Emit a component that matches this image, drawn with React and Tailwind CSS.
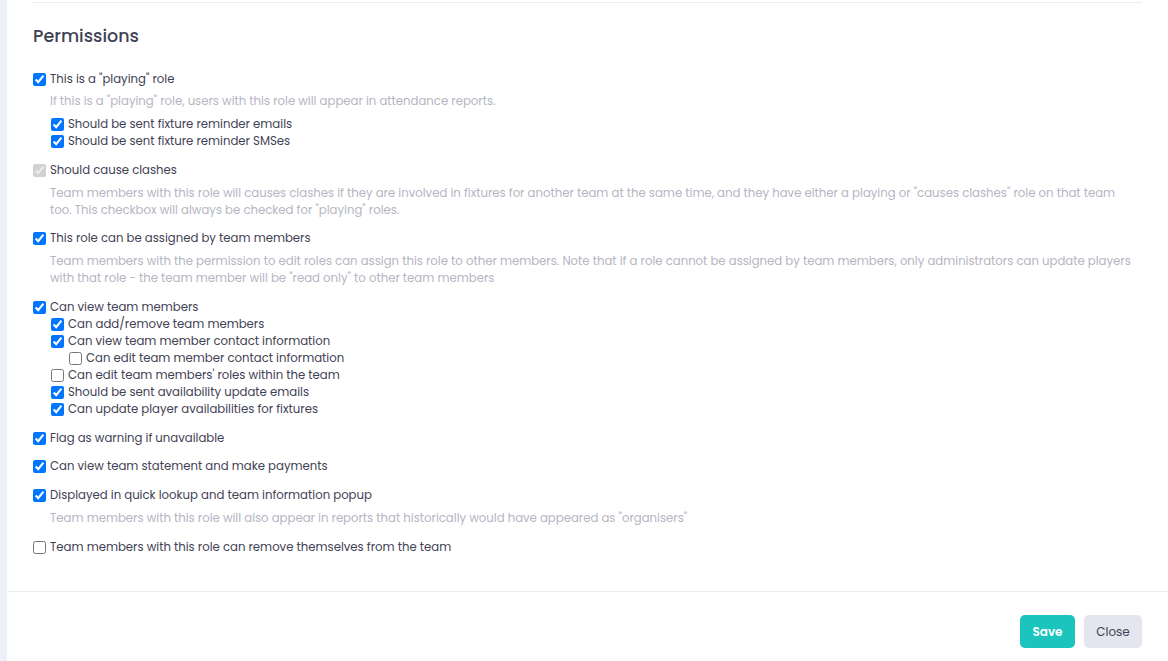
import React from "react";

function Box({ checked, disabled }) {
  return (
    <input
      type="checkbox"
      defaultChecked={checked}
      disabled={disabled}
      className="m-0 h-[13px] w-[13px] shrink-0 accent-[#0075ff]"
    />
  );
}

function Row({ checked, disabled, children, indent = 0 }) {
  const pad = indent === 0 ? "pl-0" : indent === 1 ? "pl-[18px]" : "pl-[36px]";
  return (
    <label className={`flex items-center gap-[4px] h-[17px] ${pad}`}>
      <Box checked={checked} disabled={disabled} />
      <span>{children}</span>
    </label>
  );
}

function Desc({ children, tight }) {
  return (
    <div className={`pl-[17px] pr-[5px] ${tight ? "mt-[5px]" : "mt-[6px]"} text-[#b5b5c3] leading-[17px]`}>
      {children}
    </div>
  );
}

export default function App() {
  return (
    <div className="flex w-[1168px] h-[661px] bg-[#eef0f8] overflow-hidden" style={{ fontFamily: "Poppins, 'Open Sans', sans-serif" }}>
      <div className="ml-[7px] flex-1 bg-white flex flex-col">
        <div className="px-[26px] flex-1">
          <div className="h-[3px] border-b border-[#ebedf3]" />
          <h2 className="mt-[22px] text-[17.5px] leading-[22px] font-medium text-[#3f4254]">Permissions</h2>
          <div className="mt-[24px] text-[11.7px] leading-[17px] text-[#3f4254]">
            <div className="mb-[12px]">
              <Row checked>This is a "playing" role</Row>
              <Desc tight>If this is a "playing" role, users with this role will appear in attendance reports.</Desc>
              <div className="mt-[6px]">
                <Row checked indent={1}>Should be sent fixture reminder emails</Row>
                <Row checked indent={1}>Should be sent fixture reminder SMSes</Row>
              </div>
            </div>
            <div className="mb-[11px]">
              <Row checked disabled>Should cause clashes</Row>
              <Desc>
                Team members with this role will causes clashes if they are involved in fixtures for another team at the same time, and they have either a playing or "causes clashes" role on that team too. This checkbox will always be checked for "playing" roles.
              </Desc>
            </div>
            <div className="mb-[12px]">
              <Row checked>This role can be assigned by team members</Row>
              <Desc>
                Team members with the permission to edit roles can assign this role to other members. Note that if a role cannot be assigned by team members, only administrators can update players with that role - the team member will be "read only" to other team members
              </Desc>
            </div>
            <div className="mb-[12px]">
              <Row checked>Can view team members</Row>
              <Row checked indent={1}>Can add/remove team members</Row>
              <Row checked indent={1}>Can view team member contact information</Row>
              <Row indent={2}>Can edit team member contact information</Row>
              <Row indent={1}>Can edit team members' roles within the team</Row>
              <Row checked indent={1}>Should be sent availability update emails</Row>
              <Row checked indent={1}>Can update player availabilities for fixtures</Row>
            </div>
            <div className="mb-[11px]">
              <Row checked>Flag as warning if unavailable</Row>
            </div>
            <div className="mb-[12px]">
              <Row checked>Can view team statement and make payments</Row>
            </div>
            <div className="mb-[12px]">
              <Row checked>Displayed in quick lookup and team information popup</Row>
              <Desc>Team members with this role will also appear in reports that historically would have appeared as "organisers"</Desc>
            </div>
            <div>
              <Row>Team members with this role can remove themselves from the team</Row>
            </div>
          </div>
        </div>
        <div className="border-t border-[#ebedf3] h-[70px] flex items-start justify-end gap-[9px] pr-[26px] pt-[23px]">
          <button className="h-[33px] w-[55px] rounded-[5px] bg-[#1bc5bd] text-white text-[12px] font-semibold">Save</button>
          <button className="h-[33px] w-[58px] rounded-[5px] bg-[#e4e6ef] text-[#3f4254] text-[12px]">Close</button>
        </div>
      </div>
    </div>
  );
}
